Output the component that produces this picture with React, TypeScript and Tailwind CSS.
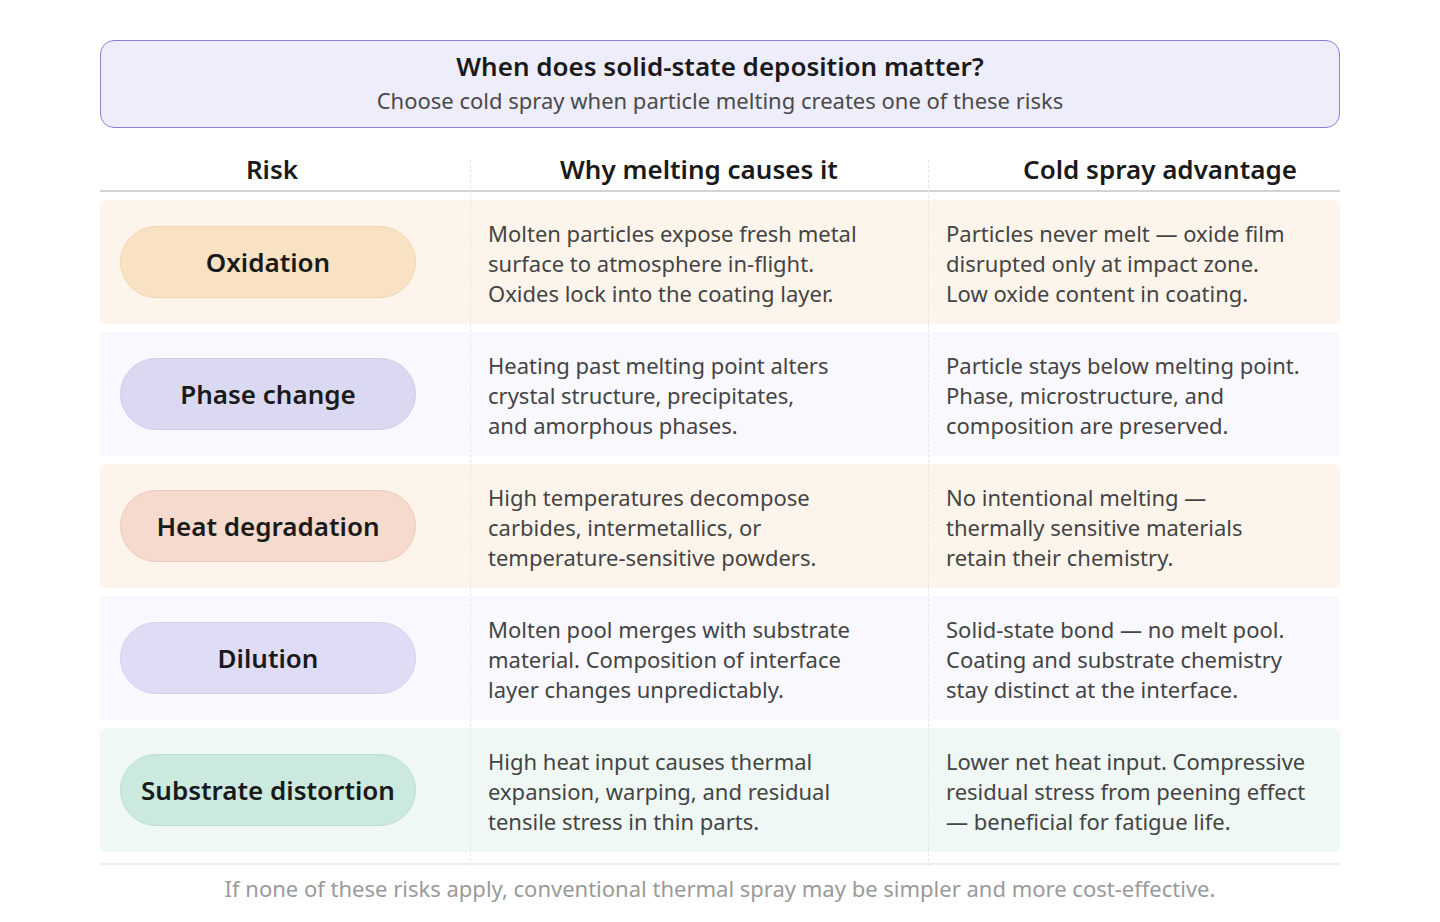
const rows = [
  {
    risk: "Oxidation",
    rowBg: "bg-[#fdf5ec]",
    pill: "bg-[#f9e2c3] border-[#f1d6b2]",
    why: ["Molten particles expose fresh metal", "surface to atmosphere in-flight.", "Oxides lock into the coating layer."],
    adv: ["Particles never melt — oxide film", "disrupted only at impact zone.", "Low oxide content in coating."],
  },
  {
    risk: "Phase change",
    rowBg: "bg-[#f8f8fe]",
    pill: "bg-[#dbd8f2] border-[#d0cdeb]",
    why: ["Heating past melting point alters", "crystal structure, precipitates,", "and amorphous phases."],
    adv: ["Particle stays below melting point.", "Phase, microstructure, and", "composition are preserved."],
  },
  {
    risk: "Heat degradation",
    rowBg: "bg-[#fdf5ec]",
    pill: "bg-[#f5dacd] border-[#ecccbd]",
    why: ["High temperatures decompose", "carbides, intermetallics, or", "temperature-sensitive powders."],
    adv: ["No intentional melting —", "thermally sensitive materials", "retain their chemistry."],
  },
  {
    risk: "Dilution",
    rowBg: "bg-[#f8f8fe]",
    pill: "bg-[#dfddf6] border-[#d3d0ee]",
    why: ["Molten pool merges with substrate", "material. Composition of interface", "layer changes unpredictably."],
    adv: ["Solid-state bond — no melt pool.", "Coating and substrate chemistry", "stay distinct at the interface."],
  },
  {
    risk: "Substrate distortion",
    rowBg: "bg-[#eff8f5]",
    pill: "bg-[#cbe9df] border-[#bcdfd3]",
    why: ["High heat input causes thermal", "expansion, warping, and residual", "tensile stress in thin parts."],
    adv: ["Lower net heat input. Compressive", "residual stress from peening effect", "— beneficial for fatigue life."],
  },
];

export default function App() {
  return (
    <div className="min-h-[922px] w-[1440px] bg-white font-['Noto_Sans',sans-serif]">
      <div className="relative mx-auto w-[1240px] pt-[40px]">
        {/* title box */}
        <div className="flex h-[88px] flex-col items-center rounded-[14px] border border-[#8a83d6] bg-[#eeedfc] pt-[8px]">
          <h1 className="text-[26px] leading-[34px] font-semibold text-[#1a1a1a]">
            When does solid-state deposition matter?
          </h1>
          <p className="mt-[2px] text-[22px] leading-[30px] text-[#4a4a4a]">
            Choose cold spray when particle melting creates one of these risks
          </p>
        </div>

        {/* column dividers */}
        <div className="pointer-events-none absolute top-[160px] left-[370px] h-[706px] border-l border-dashed border-[#e6e6e6]" />
        <div className="pointer-events-none absolute top-[160px] left-[828px] h-[706px] border-l border-dashed border-[#e6e6e6]" />

        {/* header */}
        <div className="mt-[22px] grid grid-cols-[370px_458px_412px] border-b-2 border-[#d4d4d4] pb-[2px] text-[26px] leading-[38px] font-semibold text-[#1a1a1a]">
          <div className="pr-[26px] text-center">Risk</div>
          <div className="text-center">Why melting causes it</div>
          <div className="pl-[52px] text-center">Cold spray advantage</div>
        </div>

        {/* rows */}
        <div className="mt-[8px] flex flex-col gap-[8px]">
          {rows.map((r) => (
            <div
              key={r.risk}
              className={`grid h-[124px] grid-cols-[370px_458px_412px] items-center rounded-md ${r.rowBg}`}
            >
              <div className="pl-[20px]">
                <div
                  className={`flex h-[72px] w-[296px] items-center justify-center rounded-full border ${r.pill} text-[26px] font-semibold text-[#1a1a1a]`}
                >
                  {r.risk}
                </div>
              </div>
              <div className="pt-[2px] pl-[18px] text-[22px] leading-[30px] text-[#444444]">
                {r.why.map((l) => (
                  <div key={l}>{l}</div>
                ))}
              </div>
              <div className="pt-[2px] pl-[18px] text-[22px] leading-[30px] text-[#444444]">
                {r.adv.map((l) => (
                  <div key={l}>{l}</div>
                ))}
              </div>
            </div>
          ))}
        </div>

        {/* footer */}
        <div className="mt-[11px] border-t-2 border-[#f0f0f0] pt-[8px] text-center text-[22px] leading-[30px] text-[#9a9a9a]">
          If none of these risks apply, conventional thermal spray may be simpler and more cost-effective.
        </div>
      </div>
    </div>
  );
}
